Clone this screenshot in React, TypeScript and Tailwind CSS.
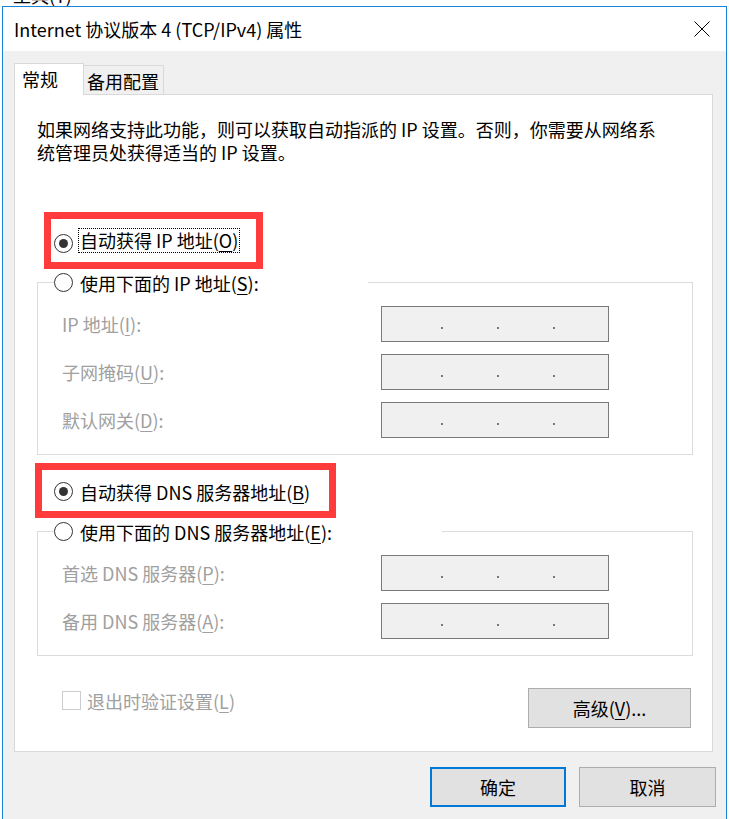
import { ReactNode } from 'react';

function Radio({ checked = false }: { checked?: boolean }) {
  return (
    <span className="flex h-[19px] w-[19px] shrink-0 items-center justify-center rounded-full border border-[#333333] bg-white">
      {checked && <span className="h-[9px] w-[9px] rounded-full bg-[#333333]" />}
    </span>
  );
}

function Key({ children }: { children: ReactNode }) {
  return <span className="underline decoration-1 underline-offset-[3px]">{children}</span>;
}

function IpBox() {
  return (
    <div className="flex h-[36px] w-[228px] items-start gap-[54px] border border-[#7a7a7a] bg-[#f0f0f0] pl-[59px] pt-[20px]">
      <span className="h-[2px] w-[2px] bg-[#86736a]" />
      <span className="h-[2px] w-[2px] bg-[#86736a]" />
      <span className="h-[2px] w-[2px] bg-[#86736a]" />
    </div>
  );
}

function AddressRow({ label }: { label: ReactNode }) {
  return (
    <div className="grid grid-cols-[319px_228px] items-center pl-[24px]">
      <span className="leading-[24px] text-[#a0a0a0]">{label}</span>
      <IpBox />
    </div>
  );
}

function GroupBox({ legend, legendWidth, children }: { legend: ReactNode; legendWidth: string; children: ReactNode }) {
  return (
    <fieldset className="ml-[22px] w-[656px] border border-[#dcdcdc] p-0">
      <legend className={`ml-[16px] flex h-[27px] items-center gap-[7px] ${legendWidth}`}>
        <Radio />
        <span className="leading-[24px]">{legend}</span>
      </legend>
      <div className="flex flex-col gap-[12px] pb-[16px] pt-[10px]">{children}</div>
    </fieldset>
  );
}

export default function App() {
  return (
    <div className="h-[819px] w-[729px] overflow-hidden bg-white font-['Noto_Sans_CJK_SC',sans-serif] text-[18px] text-black">
      {/* window behind the dialog */}
      <div className="h-[6px] overflow-hidden pl-[13px]">
        <div className="-mt-[15px] leading-[20px]">工具(T)</div>
      </div>

      <div className="ml-[2px] w-[725px] border border-[#1883d7] bg-[#f0f0f0]">
        {/* Title bar */}
        <div className="flex h-[44px] items-center justify-between bg-white pl-[11px] pr-[16px]">
          <span className="leading-[24px]">Internet 协议版本 4 (TCP/IPv4) 属性</span>
          <svg width="16" height="16" viewBox="0 0 16 16" fill="none" stroke="#000" strokeWidth="1">
            <path d="M0.5 0.5L15.5 15.5M15.5 0.5L0.5 15.5" />
          </svg>
        </div>

        <div className="px-[11px] pb-[20px] pt-[12px]">
          {/* Tabs */}
          <div className="flex items-end">
            <div className="relative z-10 -mb-px h-[32px] w-[70px] border border-b-0 border-[#d9d9d9] bg-white pl-[7px] pt-[3px] leading-[24px]">
              常规
            </div>
            <div className="h-[29px] w-[80px] border border-b-0 border-l-0 border-[#d9d9d9] bg-[#f0f0f0] pl-[3px] pt-[3px] leading-[24px]">
              备用配置
            </div>
          </div>

          {/* Tab panel */}
          <div className="w-[699px] border border-[#d9d9d9] bg-white pb-[23px] pt-[23px]">
            <p className="pl-[22px] leading-[23px]">
              如果网络支持此功能，则可以获取自动指派的 IP 设置。否则，你需要从网络系
              <br />
              统管理员处获得适当的 IP 设置。
            </p>

            <div className="ml-[29px] mt-[48px] flex h-[57px] w-[219px] items-start border-[7px] border-[#ff3b3b] pl-[3px] pt-[9px]">
              <span className="mt-[6px]">
                <Radio checked />
              </span>
              <span className="ml-[5px] h-[25px] border border-dotted border-black px-[1px] leading-[23px]">
                自动获得 IP 地址(<Key>O</Key>)
              </span>
            </div>

            <GroupBox legendWidth="w-[314px]" legend={<>使用下面的 IP 地址(<Key>S</Key>):</>}>
              <AddressRow label={<>IP 地址(<Key>I</Key>):</>} />
              <AddressRow label={<>子网掩码(<Key>U</Key>):</>} />
              <AddressRow label={<>默认网关(<Key>D</Key>):</>} />
            </GroupBox>

            <div className="ml-[20px] mt-[8px] h-[55px] w-[301px] border-[7px] border-[#ff3b3b] pl-[12px] pt-[12px]">
              <div className="flex h-[19px] items-center gap-[7px]">
                <Radio checked />
                <span className="leading-[24px]">
                  自动获得 DNS 服务器地址(<Key>B</Key>)
                </span>
              </div>
            </div>

            <GroupBox legendWidth="w-[388px]" legend={<>使用下面的 DNS 服务器地址(<Key>E</Key>):</>}>
              <AddressRow label={<>首选 DNS 服务器(<Key>P</Key>):</>} />
              <AddressRow label={<>备用 DNS 服务器(<Key>A</Key>):</>} />
            </GroupBox>

            <div className="mt-[32px] flex items-start justify-between pl-[47px] pr-[21px]">
              <div className="mt-[3px] flex h-[19px] items-center gap-[6px]">
                <span className="h-[19px] w-[19px] border border-[#cccccc] bg-white" />
                <span className="leading-[24px] text-[#a0a0a0]">
                  退出时验证设置(<Key>L</Key>)
                </span>
              </div>
              <button className="flex h-[40px] w-[163px] items-center justify-center border border-[#adadad] bg-[#e1e1e1] leading-[24px]">
                高级(<Key>V</Key>)...
              </button>
            </div>
          </div>

          {/* Dialog buttons */}
          <div className="mt-[15px] flex justify-end gap-[13px] pr-[-1px]">
            <button className="flex h-[40px] w-[136px] items-center justify-center border-2 border-[#0078d7] bg-[#e1e1e1] leading-[24px]">
              确定
            </button>
            <button className="-mr-px flex h-[40px] w-[137px] items-center justify-center border border-[#adadad] bg-[#e1e1e1] leading-[24px]">
              取消
            </button>
          </div>
        </div>
      </div>
    </div>
  );
}
